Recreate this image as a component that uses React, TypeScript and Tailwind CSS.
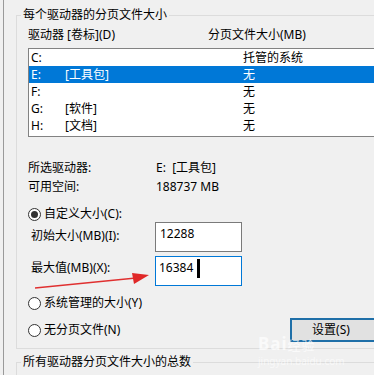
import React from "react";

const drives = [
  { letter: "C:", label: "", size: "托管的系统" },
  { letter: "E:", label: "[工具包]", size: "无", selected: true },
  { letter: "F:", label: "", size: "无" },
  { letter: "G:", label: "[软件]", size: "无" },
  { letter: "H:", label: "[文档]", size: "无" },
];

function Radio({ checked }: { checked?: boolean }) {
  return (
    <span className="flex h-[13px] w-[13px] shrink-0 items-center justify-center rounded-full border border-[#333333] bg-white">
      {checked && <span className="h-[7px] w-[7px] rounded-full bg-[#333333]" />}
    </span>
  );
}

export default function App() {
  return (
    <div
      className="relative h-[375px] w-[374px] overflow-hidden bg-[#f0f0f0] text-[12px] leading-[16px] text-black"
      style={{ fontFamily: '"Noto Sans", "Noto Sans CJK SC", sans-serif' }}
    >
      <div className="ml-[3px] h-full border-l border-[#9a9a9a] pl-[12px] pt-[7px]">
        <fieldset className="w-[400px] border border-[#dcdcdc] px-[4px] pb-[6px]">
          <legend className="h-[16px] px-[2px]">每个驱动器的分页文件大小</legend>

          <div className="pl-[7px] pt-[4px]">
            <div className="flex h-[16px]">
              <span className="w-[180px]">驱动器 [卷标](D)</span>
              <span>分页文件大小(MB)</span>
            </div>

            <div className="mt-[5px] h-[89px] overflow-hidden border border-[#828282] bg-white">
              {drives.map((d) => (
                <div
                  key={d.letter}
                  className={
                    "flex h-[17px] items-center pl-[2px] " +
                    (d.selected ? "bg-[#0078d7] text-white" : "")
                  }
                >
                  <span className="w-[34px]">{d.letter}</span>
                  <span className="w-[178px]">{d.label}</span>
                  <span>{d.size}</span>
                </div>
              ))}
            </div>

            <div className="mt-[23px] flex h-[16px]">
              <span className="w-[128px]">所选驱动器:</span>
              <span>E:&nbsp;&nbsp;[工具包]</span>
            </div>
            <div className="mt-[3px] flex h-[16px]">
              <span className="w-[128px]">可用空间:</span>
              <span>188737 MB</span>
            </div>

            <div className="mt-[11px] flex h-[16px] items-center gap-[3px]">
              <Radio checked />
              <span>自定义大小(C):</span>
            </div>

            <div className="flex items-start">
              <span className="ml-[3px] mt-[6px] w-[124px]">初始大小(MB)(I):</span>
              <div className="h-[30px] w-[87px] border border-[#7a7a7a] bg-white px-[4px] pt-[3px]">
                12288
              </div>
            </div>

            <div className="relative mt-[4px] flex items-start">
              <span className="ml-[3px] mt-[4px] w-[124px]">最大值(MB)(X):</span>
              <div className="flex h-[30px] w-[87px] items-start border border-[#0078d7] bg-white px-[3px] pt-[3px]">
                <span>16384</span>
                <span className="ml-[4px] mt-[-1px] h-[19px] w-[3px] bg-black" />
              </div>
              <svg
                className="absolute left-[6px] top-[14px]"
                width="120"
                height="26"
                viewBox="0 0 120 26"
              >
                <path d="M1 18 L102 8" stroke="#e03030" strokeWidth="1.3" fill="none" />
                <polygon points="115,5 98,3 100,14" fill="#e02828" />
              </svg>
            </div>

            <div className="mt-[9px] flex h-[16px] items-center gap-[3px]">
              <Radio />
              <span>系统管理的大小(Y)</span>
            </div>

            <div className="mt-[7px] flex h-[24px] items-center">
              <div className="flex w-[262px] items-center gap-[3px]">
                <Radio />
                <span>无分页文件(N)</span>
              </div>
              <button className="flex h-[24px] w-[88px] items-center justify-center border-2 border-[#1f6fa8] bg-[#e1e1e1] pr-[6px] text-[12px]">
                设置(S)
              </button>
            </div>
          </div>
        </fieldset>

        <fieldset className="mt-[5px] h-[40px] w-[400px] border border-[#dcdcdc] px-[4px]">
          <legend className="h-[16px] px-[2px]">所有驱动器分页文件大小的总数</legend>
        </fieldset>
      </div>

      <div className="pointer-events-none absolute left-[258px] top-[337px] flex flex-col items-start text-white/70">
        <span className="text-[17px] font-bold leading-[14px] tracking-[1px]">
          Bai<span className="text-[13px] font-normal">经验</span>
        </span>
        <span className="mt-[4px] text-[10px] leading-[10px] text-white/60">jingyan.baidu.com</span>
      </div>
    </div>
  );
}
